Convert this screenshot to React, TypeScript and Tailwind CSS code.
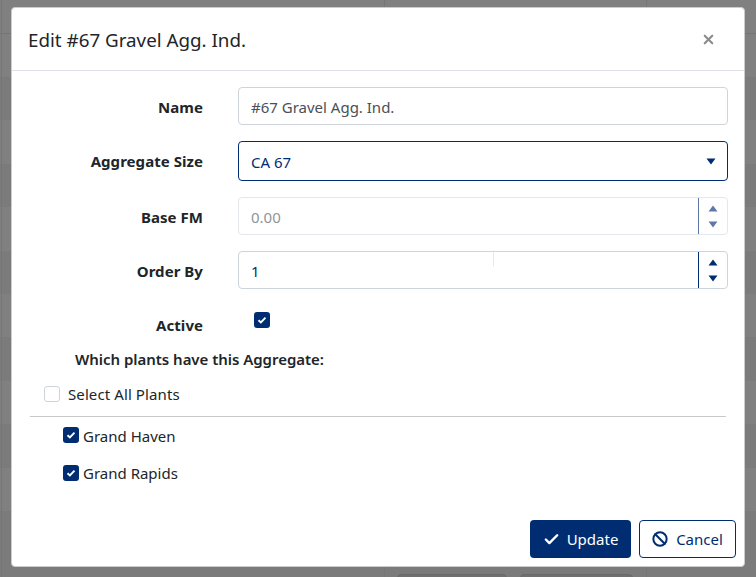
import { Check, Ban, X } from 'lucide-react';

const labelClass = "w-[191px] shrink-0 pt-[2px] text-right font-bold tracking-[0.05px] text-[#212529]";
const inputClass = "flex h-[38px] flex-1 items-center rounded-[4px] border border-[#ced4da] bg-white px-3";

const rows = [true, false, true, false, true, false, true, false, true, false];

const Spinner = ({ disabled }: { disabled?: boolean }) => (
  <div className={disabled ? "flex h-full w-[29px] flex-col items-center justify-center gap-[9px] border-l border-l-[#5b76a3]" : "flex h-full w-[29px] flex-col items-center justify-center gap-[9px] border-l border-l-[#002d72]"}>
    <svg width="10" height="7" viewBox="0 0 10 7"><path d="M5 0.5 L9.5 6.5 H0.5 Z" fill={disabled ? "#5f79a6" : "#002d72"} /></svg>
    <svg width="10" height="7" viewBox="0 0 10 7"><path d="M5 6.5 L9.5 0.5 H0.5 Z" fill={disabled ? "#5f79a6" : "#002d72"} /></svg>
  </div>
);

const CheckBox = ({ checked }: { checked?: boolean }) => (
  <span className={checked ? "flex size-4 shrink-0 items-center justify-center rounded-[3px] bg-[#002d72]" : "flex size-4 shrink-0 items-center justify-center rounded-[3px] border border-[#ced4da] bg-white"}>
    {checked && (
      <svg width="10" height="8" viewBox="0 0 10 8" fill="none"><path d="M1.5 4.2 L3.9 6.4 L8.5 1.6" stroke="white" strokeWidth="1.9" /></svg>
    )}
  </span>
);

export default function App() {
  return (
    <div className="relative h-[577px] w-[756px] overflow-hidden bg-[#808080] font-['Noto_Sans','Open_Sans',sans-serif] text-[15px]">
      {/* page behind the backdrop */}
      <div className="flex flex-col">
        <div className="h-[34px] border-b border-b-[#747474]" />
        <div className="h-[43px]" />
        {rows.map((dark, i) => (
          <div key={i} className={dark ? "h-[43.4px] bg-[#7b7b7b]" : "h-[43.4px] bg-[#808080]"} />
        ))}
        <div className="h-[70px] bg-[#7b7b7b]" />
      </div>
      <div className="absolute left-[1px] top-0 h-full w-px bg-[#767676]" />
      <div className="absolute left-[384px] top-0 h-full w-px bg-[#767676]" />
      <div className="absolute left-[646px] top-0 h-full w-px bg-[#767676]" />
      <div className="absolute left-[397px] top-[574px] h-[10px] w-[110px] rounded-[4px] border border-[#6a6a6a] bg-[#707070]" />
      <div className="absolute left-[520px] top-[574px] h-[10px] w-[113px] rounded-[4px] border border-[#6a6a6a] bg-[#707070]" />

      <div className="absolute left-[11px] top-[7px] flex h-[560px] w-[734px] flex-col rounded-[4px] border border-[#cccccc] bg-white">
        <div className="flex h-[63px] shrink-0 items-center justify-between border-b border-b-[#dee2e6] pl-[16px] pr-[28px]">
          <h5 className="pt-[3px] text-[18.8px] text-[#212529]">Edit #67 Gravel Agg. Ind.</h5>
          <X className="size-[15px] text-[#8c8c8c]" strokeWidth={3.4} />
        </div>

        <div className="flex flex-1 flex-col pr-[16px] pt-[16px]">
          <div className="mb-4 flex items-center gap-[35px]">
            <label className={labelClass}>Name</label>
            <div className={`${inputClass} pt-[2px] text-[#495057]`}>#67 Gravel Agg. Ind.</div>
          </div>

          <div className="mb-4 flex items-center gap-[35px]">
            <label className={`${labelClass} -mt-[2px]`}>Aggregate Size</label>
            <div className="flex h-[40px] flex-1 items-center justify-between rounded-[4px] border border-[#002d72] bg-white pl-3 pr-[11px] text-[#002d72]">
              <span className="pt-[2px]">CA 67</span>
              <svg width="10" height="7" viewBox="0 0 10 7"><path d="M5 6.5 L9.5 0.5 H0.5 Z" fill="#002d72" /></svg>
            </div>
          </div>

          <div className="mb-4 flex items-center gap-[35px]">
            <label className={labelClass}>Base FM</label>
            <div className="flex h-[38px] flex-1 items-center justify-between rounded-[4px] border border-[#e4e7eb] bg-white pl-3 text-[#8f959b]">
              <span className="pt-[2px]">0.00</span>
              <Spinner disabled />
            </div>
          </div>

          <div className="mb-[23px] flex items-center gap-[35px]">
            <label className={labelClass}>Order By</label>
            <div className="flex h-[38px] flex-1 items-center justify-between rounded-[4px] border border-[#ced4da] bg-white pl-3 text-[#002d72]">
              <span className="pt-[2px]">1</span>
              <Spinner />
            </div>
          </div>

          <div className="flex items-start gap-[51px]">
            <label className={labelClass}>Active</label>
            <CheckBox checked />
          </div>

          <div className="mt-[11px] pl-[63px] font-semibold tracking-[-0.03px] text-[#212529]">Which plants have this Aggregate:</div>

          <div className="mt-[13px] flex items-center gap-2 pl-[32px] tracking-[0.1px] text-[#212529]">
            <CheckBox />
            <span>Select All Plants</span>
          </div>

          <div className="ml-[18px] mr-[2px] mt-[10px] border-t border-t-[#c8c8c8]" />

          <div className="mt-[6px] flex items-center gap-1 pl-[51px] text-[#212529]">
            <CheckBox checked />
            <span className="pt-[2px]">Grand Haven</span>
          </div>
          <div className="mt-[15px] flex items-center gap-1 pl-[51px] text-[#212529]">
            <CheckBox checked />
            <span>Grand Rapids</span>
          </div>
        </div>

        <div className="flex justify-end gap-2 pb-[8px] pr-[8px]">
          <button className="flex h-[38px] w-[101px] items-center justify-center gap-[7px] rounded-[4px] bg-[#002d72] text-white">
            <Check className="size-[17px]" strokeWidth={3.4} />
            Update
          </button>
          <button className="flex h-[38px] w-[97px] items-center justify-center gap-2 rounded-[4px] border border-[#002d72] bg-white text-[#002d72]">
            <Ban className="size-[16px]" strokeWidth={3} />
            Cancel
          </button>
        </div>
      </div>

      {/* mouse cursor caught in the shot */}
      <div className="absolute left-[493px] top-[250px] h-[16px] w-px bg-[#e8e8e8]" />
    </div>
  );
}
